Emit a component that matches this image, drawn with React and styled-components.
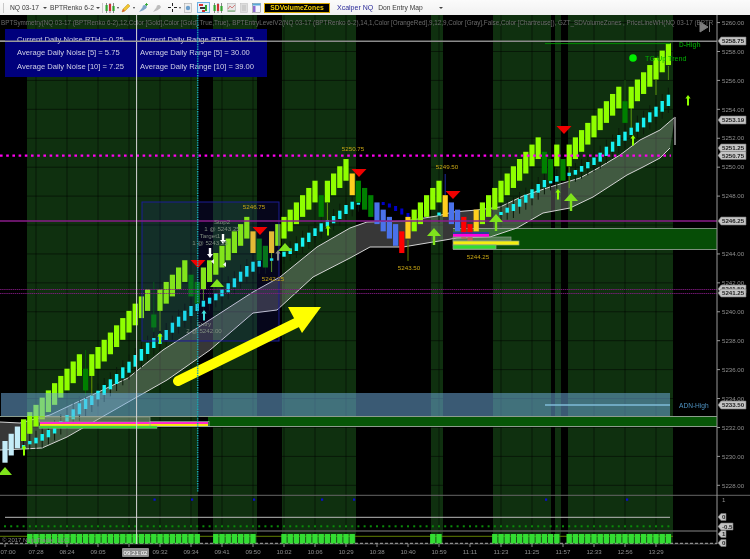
import styled, { createGlobalStyle } from 'styled-components';

const GlobalStyle = createGlobalStyle`
	html, body {
		margin: 0;
		padding: 0;
		background: #000;
	}
	#root {
		width: 750px;
		height: 559px;
	}
`;

const STEP = 6.2;
const barX = (i) => 5 + STEP * i;
const levelY = (l) => 441 - 7.23 * l;
const priceY = (p) => 51.5 + (5258 - p) * 14.46;

const KINDS = {
	b: '#c4ecf8',
	l: '#8fff00',
	d: '#008000',
	g: '#ffcf1f',
	u: '#4a72ea',
	r: '#ff0000',
};

// renko bars: level of the top edge (half point steps) and the colour kind
const BARS = (
	'0b 1b 2b 3l 4l 5l 6l 7l 8l 9l 10l 11l 12l 10d 12l 13l 14l 15l 16l 17l 18l 19l 20l 21l 17.5s 21l 22l 23l 24l 25l ' +
	'23d 22d 24l 25l 26l 27l 28l 29l 30l 31l 29g 28d 27d 29g 30l 31l 32l 33l 34l 35l 36l 34d 36l 37l 38l 39l 37g 36d 35d 34d ' +
	'33u 32u 31u 30u 29r 31g 32l 33l 34l 35l 36l 34g 33u 32u 31r 30r 32g 33l 34l 35l 36l 37l 38l 39l 40l 41l 42l 40d 39d 41l ' +
	'39d 41l 42l 43l 44l 45l 46l 47l 48l 49l 47d 49l 50l 51l 52l 53l 54l 55l'
)
	.split(' ')
	.map((s) => ({ level: parseFloat(s), kind: s.slice(-1) }));

// cyan bars of the lower band: bar index, top, height
const CYAN = [
	[3, 445, 4], [4, 441, 3.3], [5, 437.7, 5.7], [6, 434, 6.7], [7, 430, 7.3], [8, 427, 6.5], [9, 421, 6.5], [10, 415, 6.7],
	[11, 409.3, 10], [12, 403.3, 11], [13, 399, 10], [14, 395.7, 9.3], [15, 390.7, 8.7], [16, 385, 10], [17, 379.3, 10],
	[18, 374, 10], [19, 367.3, 11], [20, 361.7, 11], [21, 355, 11.7], [22, 349, 11.7], [23, 342.7, 11.3], [24, 338, 10],
	[25, 334, 10], [26, 330, 10], [27, 322.7, 10], [28, 316.7, 10], [29, 310.7, 10], [30, 306, 10], [31, 304, 7], [32, 300.7, 6],
	[33, 297.7, 6], [34, 293.3, 7], [35, 289.3, 7], [36, 283.3, 9], [37, 278.3, 9], [38, 271.7, 10], [39, 266, 10.7],
	[40, 261.7, 10], [41, 260.7, 6], [42, 262.7, 4], [43, 258.3, 2.5], [45, 251.7, 5], [46, 248.3, 5.7], [47, 243.3, 7.7],
	[48, 237.7, 9], [49, 232.7, 9.3], [50, 228.3, 7.7], [51, 223.3, 8.3], [52, 220, 6.7], [53, 216, 7.3], [54, 210.7, 8.3],
	[55, 205, 9], [56, 201.7, 7.7], [57, 202.7, 2], [70, 212.5, 3], [80, 212, 3], [81, 207.7, 5], [82, 204, 7], [83, 199, 7.7],
	[84, 194.7, 8], [85, 189.3, 9], [86, 184, 8.7], [87, 180, 7.3], [88, 180.7, 2.7], [89, 176, 5.7], [91, 172.7, 3.3],
	[92, 170, 4.7], [93, 166, 5.7], [94, 162, 6.3], [95, 157.5, 7.5], [96, 152.7, 9], [97, 146.7, 9.3], [98, 141.7, 10],
	[99, 135, 11], [100, 131.7, 9], [101, 127.7, 7.3], [102, 122.7, 9], [103, 117.7, 9.7], [104, 112.3, 10], [105, 106.7, 10],
	[106, 101, 10.7], [107, 94.7, 11.3],
];

const NAVY_MARKS = [[61, 202, 3], [62, 203.5, 4], [63, 206, 5], [64, 208.5, 6], [65, 213, 4]];

const WICKS = [
	[13, 350, 396, '#006400'], [14, 375, 402, '#6a9a00'], [24, 282, 332, '#005c00'], [25, 311, 331, '#5f9f10'],
	[32, 289, 300, '#5f9f10'], [43, 253, 272, '#5f9f10'], [52, 203, 226, '#5f9f10'], [65, 240, 261, '#5f8000'],
	[71, 174, 195, '#1c2fa0'], [90, 167, 176, '#3f6a10'], [91, 167, 188, '#5f9f10'], [100, 80, 101, '#1c5c10'],
	[101, 108, 128, '#5f9f10'], [105, 80, 95, '#5f9f10'], [107, 66, 80, '#4f8f10'],
];

const UPPER_BAND = [
	[0, 422], [20, 423], [50, 415], [128, 378], [163, 350], [253, 292], [280, 277], [317, 247], [350, 228], [367, 222], [405, 221],
	[437, 216], [453, 212], [477, 210], [500, 207], [523, 196], [550, 187], [580, 178], [600, 167], [620, 155], [640, 140],
	[660, 130], [675, 117],
];
const LOWER_BAND = [
	[0, 450], [23, 449], [42, 448], [67, 437], [137, 397], [167, 380], [210, 350], [253, 313], [277, 310], [313, 277], [350, 258],
	[370, 247], [403, 247], [433, 242], [457, 238], [490, 237], [517, 228], [543, 213], [570, 208], [593, 197], [627, 175],
	[643, 167], [660, 158], [670, 148],
];

const SESSIONS = [[27, 198], [213, 257], [282, 356], [431, 443], [493, 551], [555, 561], [568, 673]];
const inSession = (x) => SESSIONS.some(([a, b]) => x >= a - 1 && x <= b + 1);

const TIMES = [
	'07:00', '07:28', '08:24', '09:05', '', '09:32', '09:34', '09:41', '09:50', '10:02', '10:06', '10:29', '10:38', '10:40',
	'10:59', '11:11', '11:23', '11:25', '11:57', '12:33', '12:56', '13:29',
];

const PRICES = [5260, 5258, 5256, 5254, 5252, 5250, 5248, 5244, 5242, 5240, 5238, 5236, 5234, 5232, 5230, 5228];

const PRICE_TAGS = [
	['5258.75', 41], ['5253.19', 120], ['5251.25', 148], ['5250.75', 155.5], ['5246.25', 221], ['5241.50', 289], ['5241.25', 293],
	['5233.50', 405],
];
const STUDY_TAGS = [['0', 517], ['-0.5', 526.5], ['1', 534], ['0', 543]];

const GOLD_LABELS = [
	['5246.75', 254, 207], ['5242.25', 273, 279], ['5250.75', 353, 149], ['5249.50', 447, 167], ['5243.50', 409, 268], ['5244.25', 478, 257],
];
const ORDER_LABELS = [
	['Stop2', 222, 222], ['1 @ 5243.25', 222, 229], ['Target1', 210, 236], ['1 @ 5243.25', 210, 243], ['Entry', 204, 324], ['2 @ 5242.00', 204, 331],
];

const RED_MARKS = [[198, 260], [260, 227], [359, 169], [453, 191], [564, 126]];
const TREE_MARKS = [[217, 279, 0], [285, 243, 0], [434, 228, 9], [496, 214, 9], [571, 193, 10], [5, 467, 0]];
const THIN_ARROWS = [
	[558, 189, '#8fff00'], [688, 95, '#8fff00'], [204, 310, '#40e0e0'], [328, 225, '#8fff00'], [160, 333, '#8fff00'], [633, 135, '#8fff00'],
	[24, 445, '#8fff00'], [278, 250, '#8a8a8a'],
];
const BLUE_DOTS = [154.5, 192, 254, 322, 354, 546, 627];

const points = (list) => list.map((p) => p.join(',')).join(' ');

const Page = styled.div`
	display: flex;
	flex-direction: column;
	width: 750px;
	height: 559px;
	background: #000;
	overflow: hidden;
	filter: blur(0.25px);
`;

const Toolbar = styled.div`
	display: flex;
	align-items: center;
	flex: 0 0 15px;
	padding-left: 3px;
	background: linear-gradient(#fbfbfb, #f1f1f1);
	font-family: 'Liberation Sans', Arial, sans-serif;
`;

const Divider = styled.span`
	width: 1px;
	height: 10px;
	margin: ${(p) => p.$margin || '0 6px 0 0'};
	background: #c8c8c8;
`;

const Picker = styled.span`
	display: flex;
	align-items: center;
	width: ${(p) => p.$width}px;
	margin-left: ${(p) => p.$left || 0}px;
	font-size: 6.7px;
	color: #3a3a3a;
	white-space: nowrap;
	&::after {
		content: '';
		margin-left: auto;
		border-left: 2px solid transparent;
		border-right: 2px solid transparent;
		border-top: 2.5px solid #444;
	}
`;

const ToolIcon = styled.span`
	position: relative;
	display: flex;
	align-items: center;
	justify-content: center;
	box-sizing: border-box;
	width: ${(p) => p.$width || 10}px;
	height: 11px;
	margin-left: ${(p) => p.$left || 0}px;
	border: ${(p) => (p.$active ? '1px solid #6fb1e4' : 'none')};
	background: ${(p) => (p.$active ? '#e3f1fb' : 'transparent')};
	&::after {
		content: '';
		display: ${(p) => (p.$caret ? 'block' : 'none')};
		position: absolute;
		right: -4px;
		top: 5px;
		border-left: 1.5px solid transparent;
		border-right: 1.5px solid transparent;
		border-top: 2px solid #444;
	}
`;

const VolumeButton = styled.span`
	box-sizing: border-box;
	width: 66px;
	height: 10px;
	margin-left: 3px;
	border: 1px solid #d9a900;
	background: #000;
	color: #f5d000;
	font-size: 6.8px;
	font-weight: 700;
	line-height: 8px;
	text-align: center;
	white-space: nowrap;
`;

const MapLink = styled.span`
	margin-left: 7px;
	font-size: 7px;
	color: #2b2b9a;
	white-space: nowrap;
`;

const ChartPane = styled.div`
	position: relative;
	flex: 1;
`;

const ChartSvg = styled.svg`
	display: block;
	width: 750px;
	height: 544px;
	font-family: 'Liberation Sans', Arial, sans-serif;
`;

const Crosshair = styled.svg`
	position: absolute;
	left: 0;
	top: 0;
	width: 750px;
	height: 544px;
	pointer-events: none;
`;

const Legend = styled.div`
	position: absolute;
	left: 1px;
	top: 3px;
	width: 712px;
	overflow: hidden;
	font-family: 'Liberation Sans', Arial, sans-serif;
	font-size: 6.3px;
	line-height: 9px;
	color: #6c6c6c;
	white-space: nowrap;
`;

const NoisePanel = styled.div`
	position: absolute;
	left: 5px;
	top: 14px;
	display: grid;
	grid-template-columns: 123px 1fr;
	align-content: center;
	width: 262px;
	height: 48px;
	padding-left: 12px;
	box-sizing: border-box;
	background: #00007c;
	font-family: 'Liberation Sans', Arial, sans-serif;
	font-size: 7.6px;
	line-height: 13.6px;
	color: #cfcfe6;
	white-space: nowrap;
`;

const Wick = styled.line`
	stroke: ${(p) => p.$color};
	stroke-width: 1;
`;

const GridLine = styled.line`
	stroke: rgba(0, 0, 0, 0.5);
`;

const PriceText = styled.text`
	fill: #8f8f8f;
	font-size: 6.1px;
`;

const TagText = styled.text`
	fill: #222;
	font-size: 6.1px;
	font-weight: 700;
`;

const GoldText = styled.text`
	fill: #c8a614;
	font-size: 6.2px;
	text-anchor: middle;
`;

const OrderText = styled.text`
	fill: #7f8d7f;
	font-size: 6.2px;
	text-anchor: middle;
`;

const PriceTag = ({ text, y }) => (
	<g>
		<path
			d={`M718 ${y} l3 -4 h25 v8 h-25 z`}
			fill="#c4c4c4"
			stroke="#777"
			strokeWidth="0.6"
		/>
		<TagText x="722" y={y + 2.2}>
			{text}
		</TagText>
	</g>
);

const StudyTag = ({ text, y }) => (
	<g>
		<path
			d={`M718 ${y} l3 -3.5 h${text.length > 1 ? 12 : 5} v7 h-${text.length > 1 ? 12 : 5} z`}
			fill="#c4c4c4"
			stroke="#777"
			strokeWidth="0.6"
		/>
		<TagText x="722" y={y + 2.2}>
			{text}
		</TagText>
	</g>
);

const Bar = ({ bar, i }) => {
	const short = bar.kind === 's';
	return (
		<rect
			x={barX(i) - 2.6}
			y={levelY(bar.level)}
			width="5.2"
			height={short ? 13 : 21.7}
			fill={short ? KINDS.d : KINDS[bar.kind]}
		/>
	);
};

const Tree = ({ x, y, stem }) => (
	<g fill="#7fe31c">
		<path d={`M${x - 7} ${y + 8} L${x} ${y} L${x + 7} ${y + 8} z`} />
		{stem > 0 && <rect x={x - 1.2} y={y + 6} width="2.4" height={stem + 2} />}
	</g>
);

const ThinArrow = ({ x, y, color }) => (
	<path
		d={`M${x} ${y} l2.6 3.5 h-1.6 v7 h-2 v-7 h-1.6 z`}
		fill={color}
	/>
);

const DownArrow = ({ x, y }) => (
	<path d={`M${x} ${y + 10} l3 -4 h-1.8 v-6 h-2.4 v6 h-1.8 z`} fill="#fff" />
);

const CandlesIcon = () => (
	<svg width="10" height="10" viewBox="0 0 10 10">
		<path d="M1.5 0v10M5 0v10M8.5 0v10" stroke="#555" strokeWidth="0.7" />
		<rect x="0.5" y="2" width="2.2" height="6" fill="#2fa52f" />
		<rect x="3.9" y="1" width="2.2" height="7" fill="#c33" />
		<rect x="7.4" y="3" width="2.2" height="5" fill="#2fa52f" />
	</svg>
);

const PencilIcon = () => (
	<svg width="10" height="10" viewBox="0 0 10 10">
		<path d="M1 9l1-3 5-5 2 2-5 5z" fill="#f2c530" stroke="#a88010" strokeWidth="0.4" />
		<path d="M1 9l1-3 2 2z" fill="#d65b3a" />
	</svg>
);

const PinIcon = ({ color, plus }) => (
	<svg width="10" height="10" viewBox="0 0 10 10">
		<path d="M1 9l3-4 3-3 2 2-3 3z" fill={color} />
		<circle cx="6.5" cy="4" r="2" fill={color} />
		{plus && <path d="M7 1.5h3M8.5 0v3" stroke="#2da52d" strokeWidth="0.9" />}
	</svg>
);

const CrossIcon = () => (
	<svg width="9" height="9" viewBox="0 0 9 9">
		<path d="M4.5 0v3M4.5 6v3M0 4.5h3M6 4.5h3" stroke="#222" strokeWidth="1" />
	</svg>
);

const PageZoomIcon = () => (
	<svg width="8" height="10" viewBox="0 0 8 10">
		<rect x="0.5" y="0.5" width="7" height="9" fill="#eee" stroke="#aaa" strokeWidth="0.6" />
		<circle cx="4" cy="5" r="2.2" fill="#6c9fcc" />
	</svg>
);

const ActiveChartIcon = () => (
	<svg width="9" height="9" viewBox="0 0 9 9">
		<rect x="0" y="1" width="4" height="2" fill="#d33" />
		<rect x="1" y="4" width="5" height="2" fill="#333" />
		<rect x="6" y="2" width="2" height="6" fill="#2aa52a" />
		<rect x="3" y="7" width="3" height="2" fill="#c33" />
	</svg>
);

const ChartIcon = () => (
	<svg width="9" height="9" viewBox="0 0 9 9">
		<rect x="0.3" y="0.3" width="8.4" height="8.4" fill="#e6e6e6" stroke="#aaa" strokeWidth="0.5" />
		<path d="M1 6l2-3 2 2 3-3" stroke="#c66" strokeWidth="0.8" fill="none" />
		<path d="M1 8h7" stroke="#6a6" strokeWidth="1" />
	</svg>
);

const DocIcon = () => (
	<svg width="8" height="10" viewBox="0 0 8 10">
		<rect x="0.5" y="0.5" width="7" height="9" fill="#ddd" stroke="#bbb" strokeWidth="0.5" />
		<path d="M2 3h4M2 5h4M2 7h4" stroke="#aaa" strokeWidth="0.6" />
	</svg>
);

const WindowIcon = () => (
	<svg width="9" height="10" viewBox="0 0 9 10">
		<rect x="0.5" y="0.5" width="8" height="9" fill="#f4f4ff" stroke="#777" strokeWidth="0.5" />
		<rect x="0.5" y="0.5" width="8" height="2" fill="#59a9d9" />
		<rect x="1" y="3" width="2.5" height="6" fill="#8d6ad0" />
	</svg>
);

const App = () => {
	const hLines = PRICES.concat(5246).map(priceY);
	const ticks = TIMES.map((_, i) => 5 + 31 * i);

	return (
		<Page>
			<GlobalStyle />
			<Toolbar>
				<Divider />
				<Picker $width={37}>NQ 03-17</Picker>
				<Picker $width={50} $left={3}>
					BPTRenko 6-2
				</Picker>
				<Divider $margin="0 0 0 2px" />
				<ToolIcon $left={2} $caret>
					<CandlesIcon />
				</ToolIcon>
				<ToolIcon $left={6} $caret>
					<PencilIcon />
				</ToolIcon>
				<ToolIcon $left={7}>
					<PinIcon color="#7fa7c9" plus />
				</ToolIcon>
				<ToolIcon $left={4}>
					<PinIcon color="#bdbdbd" />
				</ToolIcon>
				<ToolIcon $left={5} $caret>
					<CrossIcon />
				</ToolIcon>
				<ToolIcon $left={7} $width={8}>
					<PageZoomIcon />
				</ToolIcon>
				<ToolIcon $left={5} $width={13} $active>
					<ActiveChartIcon />
				</ToolIcon>
				<ToolIcon $left={3}>
					<CandlesIcon />
				</ToolIcon>
				<ToolIcon $left={3}>
					<ChartIcon />
				</ToolIcon>
				<ToolIcon $left={4} $width={8}>
					<DocIcon />
				</ToolIcon>
				<ToolIcon $left={4} $width={9}>
					<WindowIcon />
				</ToolIcon>
				<VolumeButton>SDVolumeZones</VolumeButton>
				<MapLink>Xcalper NQ</MapLink>
				<Picker $width={65} $left={5}>
					Don Entry Map
				</Picker>
			</Toolbar>
			<ChartPane>
				<ChartSvg viewBox="0 15 750 544">
					{SESSIONS.map(([a, b]) => (
						<rect key={a} x={a} y="15" width={b - a} height="528" fill="#0f300f" />
					))}
					{hLines.map((y) => (
						<GridLine key={y} x1="0" x2="717" y1={y} y2={y} />
					))}
					{ticks.map((x) => (
						<GridLine key={x} x1={x} x2={x} y1="15" y2="543" />
					))}

					<rect x="453" y="228" width="264" height="22" fill="#064d06" />
					<path d="M453 228.5H717M453 249.5H717" stroke="#7d8f7d" />
					<rect x="208" y="416" width="509" height="10" fill="#075607" />
					<path d="M0 416.5H717M150 426.5H717" stroke="#8d9d8d" />

					<polygon
						points={points(UPPER_BAND.concat([...LOWER_BAND].reverse()))}
						fill="rgba(205,205,205,0.27)"
					/>
					<polyline points={points(UPPER_BAND)} fill="none" stroke="#d4d4d4" strokeWidth="1" />
					<polyline points={points(LOWER_BAND)} fill="none" stroke="#d4d4d4" strokeWidth="1" />
					<path d="M675 117V145" stroke="#777" strokeWidth="2" />

					{CYAN.map(([i, top, h]) => (
						<Wick key={i} x1={barX(i)} x2={barX(i)} y1={top - 7} y2={top + h + 7} $color="#0b1a0b" />
					))}
					{WICKS.map(([i, a, b, color]) => (
						<Wick key={i} x1={barX(i)} x2={barX(i)} y1={a} y2={b} $color={color} />
					))}
					{CYAN.map(([i, top, h]) => (
						<rect key={i} x={barX(i) - 1.7} y={top} width="3.4" height={h} fill="#17f2f2" />
					))}
					{NAVY_MARKS.map(([i, top, h]) => (
						<rect key={i} x={barX(i) - 1.5} y={top} width="3" height={h} fill="#0000c8" />
					))}
					{BARS.map((bar, i) => (
						<Bar key={i} bar={bar} i={i} />
					))}

					<rect
						x="142"
						y="202"
						width="137"
						height="139"
						fill="rgba(50,50,210,0.13)"
						stroke="#1c1c96"
					/>

					<rect x="1" y="393" width="669" height="23" fill="rgba(112,172,222,0.52)" />
					<path d="M545 405H670" stroke="#7fbcd8" strokeWidth="1.4" />
					<path d="M0 41.3H717" stroke="#8a8a8a" strokeWidth="1.4" />
					<path d="M545 43.6H670" stroke="#008c00" strokeWidth="1" />

					<rect x="453" y="232" width="36" height="2" fill="#2030c0" opacity="0.7" />
					<rect x="453" y="234" width="36" height="3" fill="#ff00e0" />
					<rect x="453" y="237" width="58" height="4" fill="rgba(150,170,150,0.55)" stroke="#8d9d8d" strokeWidth="0.7" />
					<rect x="453" y="241" width="66" height="4" fill="#f5ee10" stroke="#8d9d8d" strokeWidth="0.7" />
					<rect x="453" y="245" width="43" height="4" fill="#30dd30" stroke="#8d9d8d" strokeWidth="0.7" />
					<rect x="39" y="417" width="111" height="5" fill="rgba(150,170,150,0.5)" stroke="#8d9d8d" strokeWidth="0.7" />
					<rect x="40" y="422" width="168" height="2" fill="#ff2ad0" />
					<rect x="40" y="424" width="168" height="2" fill="#f5e810" />
					<rect x="150" y="421.5" width="59" height="5" fill="none" stroke="#9aa59a" strokeWidth="0.8" />
					<rect x="39" y="426" width="118" height="2.4" fill="#30dd30" stroke="#8d9d8d" strokeWidth="0.5" />

					<path d="M0 155.6H671" stroke="#ff00f0" strokeWidth="2.4" strokeDasharray="2.6 3.6" />
					<path d="M0 221H717" stroke="#8a1c8a" strokeWidth="1.5" />
					<path d="M0 289.5H717M0 293.5H717" stroke="#8a1c8a" strokeWidth="0.8" strokeDasharray="1.5 0.6" />

					{RED_MARKS.map(([x, y]) => (
						<path key={x} d={`M${x - 7.5} ${y} H${x + 7.5} L${x} ${y + 8} z`} fill="#f00000" />
					))}
					{TREE_MARKS.map(([x, y, stem]) => (
						<Tree key={x} x={x} y={y} stem={stem} />
					))}
					{THIN_ARROWS.map(([x, y, color]) => (
						<ThinArrow key={x} x={x} y={y} color={color} />
					))}
					<DownArrow x={210} y={248} />
					<DownArrow x={223} y={234} />
					<path d="M214 259l-3 2.5 3 2.5zM226 262l-3 2.5 3 2.5z" fill="#f2f2f2" />

					<path d="M178 381L304 319" stroke="#ffff00" strokeWidth="10" strokeLinecap="round" />
					<path d="M321 307H288L302 333z" fill="#ffff00" />

					{GOLD_LABELS.map(([text, x, y]) => (
						<GoldText key={text} x={x} y={y + 2}>
							{text}
						</GoldText>
					))}
					{ORDER_LABELS.map(([text, x, y]) => (
						<OrderText key={`${text}${y}`} x={x} y={y + 2}>
							{text}
						</OrderText>
					))}

					<circle cx="633" cy="58" r="3.8" fill="#00f000" />
					<text x="645" y="60.5" fontSize="7.2" fill="#00b000">
						TG Up Trend
					</text>
					<text x="679" y="46.5" fontSize="6.6" fontWeight="700" fill="#008c00">
						D-High
					</text>
					<text x="679" y="407.5" fontSize="6.6" fill="#4f93c2">
						ADN-High
					</text>
					<path d="M700 22V32L708 27z M709.5 22V32" fill="#7d7d7d" stroke="#7d7d7d" />

					<path d="M0 495.3H750" stroke="#666" />
					<path d="M5 517.3H670" stroke="#bbb" />
					<path d="M0 531H717" stroke="#5a5a5a" strokeWidth="1.6" />
					<path d="M0 544H717" stroke="#444" />
					{BLUE_DOTS.map((x) => (
						<rect key={x} x={x - 1} y="498.5" width="2.2" height="2.2" fill="#0a0ad8" />
					))}
					{BARS.map((_, i) => (
						<rect key={i} x={barX(i) - 1} y="525.3" width="2" height="2" fill="#0a8a0a" />
					))}
					<path d="M0 536.3H673" stroke="#5f7f00" />
					<path d="M0 543.3H717" stroke="#aaa" strokeDasharray="3 2" />
					{BARS.map((_, i) =>
						inSession(barX(i)) ? (
							<rect key={i} x={barX(i) - 2.7} y="534" width="5.4" height="9.5" fill="#33dd33" />
						) : null
					)}
					<text x="2" y="542" fontSize="6" fill="#8a8a8a">
						© 2017 NinjaTrader, LLC
					</text>

					<path d="M717 15V544" stroke="#999" />
					{PRICES.map((p) => (
						<g key={p}>
							<path d={`M717 ${priceY(p)}h3`} stroke="#999" />
							<PriceText x="722" y={priceY(p) + 2.2}>
								{p}.00
							</PriceText>
						</g>
					))}
					{PRICE_TAGS.map(([text, y]) => (
						<PriceTag key={y} text={text} y={y} />
					))}
					<PriceText x="722" y="502.3">
						1
					</PriceText>
					{STUDY_TAGS.map(([text, y]) => (
						<StudyTag key={y} text={text} y={y} />
					))}

					{ticks.map((x, i) => (
						<g key={x}>
							<path d={`M${x} 544v3`} stroke="#888" />
							<PriceText x={i === 0 ? x + 3 : x} y="554" textAnchor="middle">
								{TIMES[i]}
							</PriceText>
						</g>
					))}
					<rect x="122" y="548" width="27" height="9" rx="1" fill="#8e8e8e" />
					<text x="135.5" y="554.6" fontSize="6.2" fill="#fff" textAnchor="middle">
						09:21:02
					</text>
				</ChartSvg>
				<Legend>
					BPTSymmetry(NQ 03-17 (BPTRenko 6-2),12,Color [Gold],Color [Gold],True,True), BPTEntryLevelV2(NQ 03-17 (BPTRenko 6-2),14,1,Color [OrangeRed],9,12,9,Color [Gray],False,Color [Chartreuse]), GZT_SDVolumeZones , PriceLineWH(NQ 03-17 (BPTR
				</Legend>
				<NoisePanel>
					<span>Current Daily Noise RTH = 0.25</span>
					<span>Current Daily Range RTH = 31.75</span>
					<span>Average Daily Noise [5] = 5.75</span>
					<span>Average Daily Range [5] = 30.00</span>
					<span>Average Daily Noise [10] = 7.25</span>
					<span>Average Daily Range [10] = 39.00</span>
				</NoisePanel>
				<Crosshair viewBox="0 15 750 544">
					<path d="M136.6 15V544" stroke="#d8d8d8" strokeWidth="1" />
					<path d="M0 41.3H267" stroke="#9a9a9a" strokeWidth="1.4" />
					<path d="M197.7 15V492" stroke="#19a5b0" strokeWidth="1.5" strokeDasharray="1.4 1" />
				</Crosshair>
			</ChartPane>
		</Page>
	);
};

export default App;
